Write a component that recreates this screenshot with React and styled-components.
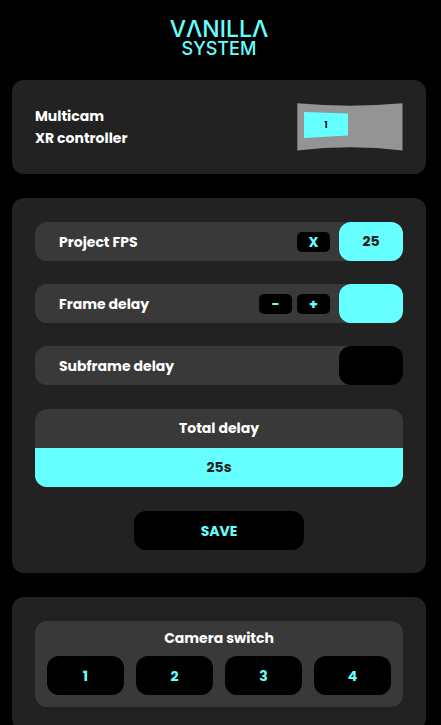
import React, { useState } from 'react';
import styled, { createGlobalStyle } from 'styled-components';

const CYAN = '#66ffff';
const PANEL = '#222222';
const ROW = '#393939';

const GlobalStyle = createGlobalStyle`
    * {
        box-sizing: border-box;
    }
    body {
        margin: 0;
        background-color: black;
        color: white;
        font-family: Poppins, Inter, sans-serif;
        font-size: 14px;
        font-weight: 700;
        line-height: 22px;
    }
    button,
    input {
        margin: 0;
        padding: 0;
        border: none;
        font: inherit;
    }
`;

const Page = styled.main`
    display: flex;
    flex-direction: column;
    gap: 24px;
    padding: 17px 15px 24px 12px;
`;

const Logo = styled.h1`
    display: flex;
    flex-direction: column;
    align-items: center;
    height: 39px;
    margin: 0;
    color: ${CYAN};
    font-family: Inter, sans-serif;
    font-weight: 500;
`;

const LogoLine = styled.span`
    font-size: ${({ $size }) => $size}px;
    line-height: ${({ $height }) => $height}px;
`;

const Card = styled.section`
    display: flex;
    flex-direction: column;
    align-items: center;
    gap: 24px;
    padding: 24px 23px 23px;
    border-radius: 12px;
    background-color: ${PANEL};
`;

const HeaderCard = styled(Card)`
    flex-direction: row;
    justify-content: space-between;
    padding: 23px;
`;

const Title = styled.h2`
    margin: 0;
    font-size: inherit;
`;

const Fields = styled.div`
    display: flex;
    flex-direction: column;
    gap: 23px;
    width: 100%;
`;

const Row = styled.div`
    display: flex;
    align-items: center;
    height: 39px;
    padding-left: 24px;
    border-radius: 12px;
    background-color: ${ROW};

    label {
        flex: 1;
    }
`;

const SmallButtons = styled.div`
    display: flex;
    gap: 5px;
    margin-right: 9px;
`;

const Button = styled.button`
    border-radius: 12px;
    background-color: black;
    color: ${CYAN};
    cursor: pointer;
`;

const SmallButton = styled(Button)`
    width: 33px;
    height: 20px;
    border-radius: 5px;
    line-height: 20px;
`;

const SaveButton = styled(Button)`
    width: 170px;
    height: 39px;
`;

const CameraButton = styled(Button)`
    height: 39px;
`;

const ValueInput = styled.input`
    width: 64px;
    height: 100%;
    border-radius: 12px;
    background-color: ${({ $dark }) => ($dark ? 'black' : CYAN)};
    color: ${({ $dark }) => ($dark ? CYAN : PANEL)};
    text-align: center;
`;

const Total = styled.div`
    width: 100%;
    overflow: hidden;
    border-radius: 12px;
    background-color: ${ROW};
    text-align: center;
    line-height: 39px;
`;

const TotalValue = styled.div`
    background-color: ${CYAN};
    color: ${PANEL};
`;

const CameraPanel = styled.div`
    width: 100%;
    padding: 0 12px 12px;
    border-radius: 12px;
    background-color: ${ROW};
    text-align: center;
`;

const CameraTitle = styled(Title)`
    line-height: 35px;
`;

const CameraGrid = styled.div`
    display: grid;
    grid-template-columns: repeat(4, 1fr);
    gap: 12px;
`;

// curved led wall with the active camera frustum on it
const ScreenPreview = ({ camera }) => (
    <svg width="106" height="48" viewBox="0 0 106 48" role="img" aria-label={`Camera ${camera}`}>
        <path d="M0.3 0.3 Q53 5 105.5 0.3 V47.5 Q53 41 0.3 47.5 Z" fill="#949494" />
        <path d="M7 9 L51 10.5 V32.5 L7 35 Z" fill={CYAN} />
        <text x="29" y="25" textAnchor="middle" fontSize="8" fill="black">{camera}</text>
    </svg>
);

const App = () => {
    const [fps, setFps] = useState('25');
    const [frames, setFrames] = useState('');
    const [subframes, setSubframes] = useState('');
    const [camera, setCamera] = useState(1);

    const stepFrames = (step) => setFrames(String(Number(frames) + step));

    return (
        <>
            <GlobalStyle />
            <Page>
                <Logo aria-label="Vanilla System">
                    <LogoLine $size={23} $height={24}>VΛNILLΛ</LogoLine>
                    <LogoLine $size={18} $height={15}>SYSTEM</LogoLine>
                </Logo>

                <HeaderCard>
                    <Title>Multicam<br />XR controller</Title>
                    <ScreenPreview camera={camera} />
                </HeaderCard>

                <Card>
                    <Fields>
                        <Row>
                            <label htmlFor="fps">Project FPS</label>
                            <SmallButtons>
                                <SmallButton aria-label="Clear FPS" onClick={() => setFps('')}>X</SmallButton>
                            </SmallButtons>
                            <ValueInput id="fps" value={fps} onChange={(e) => setFps(e.target.value)} />
                        </Row>
                        <Row>
                            <label htmlFor="frames">Frame delay</label>
                            <SmallButtons>
                                <SmallButton onClick={() => stepFrames(-1)}>-</SmallButton>
                                <SmallButton onClick={() => stepFrames(1)}>+</SmallButton>
                            </SmallButtons>
                            <ValueInput id="frames" value={frames} onChange={(e) => setFrames(e.target.value)} />
                        </Row>
                        <Row>
                            <label htmlFor="subframes">Subframe delay</label>
                            <ValueInput
                                id="subframes"
                                $dark
                                value={subframes}
                                onChange={(e) => setSubframes(e.target.value)}
                            />
                        </Row>
                    </Fields>
                    <Total>
                        <div>Total delay</div>
                        <TotalValue>25s</TotalValue>
                    </Total>
                    <SaveButton>SAVE</SaveButton>
                </Card>

                <Card>
                    <CameraPanel>
                        <CameraTitle>Camera switch</CameraTitle>
                        <CameraGrid>
                            {[1, 2, 3, 4].map((n) => (
                                <CameraButton key={n} onClick={() => setCamera(n)}>{n}</CameraButton>
                            ))}
                        </CameraGrid>
                    </CameraPanel>
                </Card>
            </Page>
        </>
    );
}

export default App;
